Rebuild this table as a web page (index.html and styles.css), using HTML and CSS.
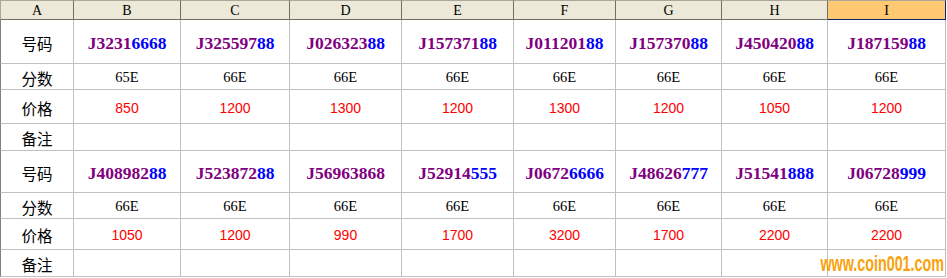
FILE: index.html
```html
<!DOCTYPE html>
<html>
<head>
<meta charset="utf-8">
<link rel="stylesheet" href="styles.css">
</head>
<body>
<div class="sheet">
  <div class="grid">
    <div class="hd first">A</div><div class="hd">B</div><div class="hd">C</div><div class="hd">D</div><div class="hd">E</div><div class="hd">F</div><div class="hd">G</div><div class="hd">H</div><div class="hd sel">I</div>

    <div class="c lab">号码</div>
    <div class="c code"><span class="p">J3231</span><span class="b">6668</span></div>
    <div class="c code"><span class="p">J325597</span><span class="b">88</span></div>
    <div class="c code"><span class="p">J026323</span><span class="b">88</span></div>
    <div class="c code"><span class="p">J157371</span><span class="b">88</span></div>
    <div class="c code"><span class="p">J011201</span><span class="b">88</span></div>
    <div class="c code"><span class="p">J157370</span><span class="b">88</span></div>
    <div class="c code"><span class="p">J450420</span><span class="b">88</span></div>
    <div class="c code"><span class="p">J187159</span><span class="b">88</span></div>

    <div class="c lab">分数</div>
    <div class="c sc">65E</div><div class="c sc">66E</div><div class="c sc">66E</div><div class="c sc">66E</div><div class="c sc">66E</div><div class="c sc">66E</div><div class="c sc">66E</div><div class="c sc">66E</div>

    <div class="c lab">价格</div>
    <div class="c pr">850</div><div class="c pr">1200</div><div class="c pr">1300</div><div class="c pr">1200</div><div class="c pr">1300</div><div class="c pr">1200</div><div class="c pr">1050</div><div class="c pr">1200</div>

    <div class="c lab">备注</div>
    <div class="c"></div><div class="c"></div><div class="c"></div><div class="c"></div><div class="c"></div><div class="c"></div><div class="c"></div><div class="c"></div>

    <div class="c lab">号码</div>
    <div class="c code"><span class="p">J408982</span><span class="b">88</span></div>
    <div class="c code"><span class="p">J523872</span><span class="b">88</span></div>
    <div class="c code"><span class="p">J56963868</span></div>
    <div class="c code"><span class="p">J52914</span><span class="b">555</span></div>
    <div class="c code"><span class="p">J0672</span><span class="b">6666</span></div>
    <div class="c code"><span class="p">J48626</span><span class="b">777</span></div>
    <div class="c code"><span class="p">J51541</span><span class="b">888</span></div>
    <div class="c code"><span class="p">J06728</span><span class="b">999</span></div>

    <div class="c lab">分数</div>
    <div class="c sc">66E</div><div class="c sc">66E</div><div class="c sc">66E</div><div class="c sc">66E</div><div class="c sc">66E</div><div class="c sc">66E</div><div class="c sc">66E</div><div class="c sc">66E</div>

    <div class="c lab">价格</div>
    <div class="c pr">1050</div><div class="c pr">1200</div><div class="c pr">990</div><div class="c pr">1700</div><div class="c pr">3200</div><div class="c pr">1700</div><div class="c pr">2200</div><div class="c pr">2200</div>

    <div class="c lab">备注</div>
    <div class="c"></div><div class="c"></div><div class="c"></div><div class="c"></div><div class="c"></div><div class="c"></div><div class="c"></div><div class="c"></div>
  </div>
  <div class="mark">www.coin001.com</div>
</div>
</body>
</html>
```

FILE: styles.css
```css
html, body {
  margin: 0;
  padding: 0;
  background: #ffffff;
}

.sheet {
  position: relative;
  width: 947px;
  height: 278px;
  overflow: hidden;
}

.grid {
  display: grid;
  grid-template-columns: 74px 107px 109px 112px 112px 102px 106px 106px 118px;
  grid-template-rows: 20px 44px 26px 34px 27px 42px 26px 31px 27px;
}

.hd {
  box-sizing: border-box;
  background: #ece9d8;
  border-top: 1px solid #aca899;
  border-right: 1px solid #716f64;
  border-bottom: 1px solid #716f64;
  display: flex;
  align-items: center;
  justify-content: center;
  font-family: "Liberation Serif", serif;
  font-size: 14px;
  color: #000;
  padding-top: 1px;
}

.hd.first {
  border-left: 1px solid #aca899;
}

.hd.sel {
  background: #ffc873;
  border-bottom-color: #0a246a;
  border-right-color: #0a246a;
}

.c {
  box-sizing: border-box;
  border-right: 1px solid #c0c0c0;
  border-bottom: 1px solid #c0c0c0;
  display: flex;
  align-items: center;
  justify-content: center;
  padding-top: 2px;
  white-space: nowrap;
}

.lab {
  border-left: 1px solid #808080;
  font-family: "Noto Sans CJK SC", "Noto Sans CJK JP", sans-serif;
  font-size: 15.5px;
  color: #000;
}

.code {
  font-family: "Liberation Serif", serif;
  font-weight: bold;
  font-size: 17.5px;
  padding-top: 3px;
}

.p { color: #800080; }
.b { color: #0000ff; }

.sc {
  font-family: "Liberation Serif", serif;
  font-size: 14.5px;
  color: #000;
}

.pr {
  font-family: "Liberation Sans", sans-serif;
  font-size: 14px;
  color: #ff0000;
}

.mark {
  position: absolute;
  right: 3px;
  top: 252px;
  font-family: "Liberation Sans", sans-serif;
  font-weight: bold;
  font-size: 22px;
  line-height: 24px;
  color: #f9a20c;
  transform: scaleX(0.65);
  transform-origin: right center;
  white-space: nowrap;
}
```
